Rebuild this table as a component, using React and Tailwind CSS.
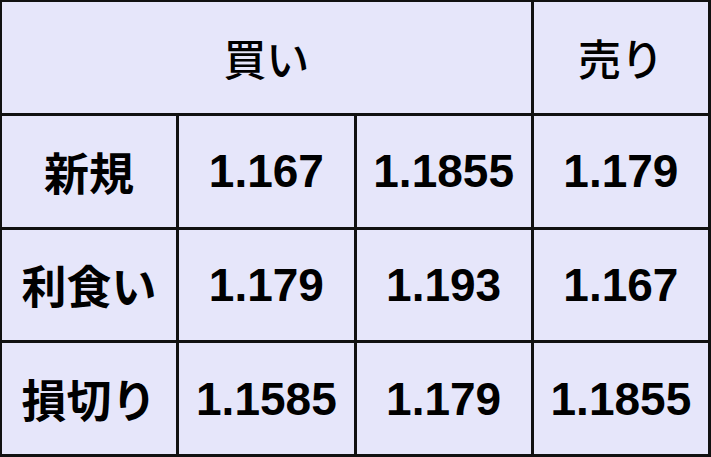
import React from "react";

const rows = [
  { label: "新規", values: ["1.167", "1.1855", "1.179"] },
  { label: "利食い", values: ["1.179", "1.193", "1.167"] },
  { label: "損切り", values: ["1.1585", "1.179", "1.1855"] },
];

const cell = "bg-[#e6e6fa] flex items-center justify-center leading-none";
const jp = "font-['Noto_Sans_CJK_JP','Noto_Sans',sans-serif]";
const num = "font-['Liberation_Sans',Arial,sans-serif]";

const App = () => {
  return (
    <div className="w-[711px] h-[457px] bg-[#111111] pt-[2px] pl-[2px] pr-[3px] pb-[3px] grid grid-cols-4 grid-rows-4 gap-[3px] text-black">
      {/* Header */}
      <div className={`${cell} ${jp} col-span-3 text-[43px] font-medium`}>買い</div>
      <div className={`${cell} ${jp} text-[43px] font-medium`}>売り</div>

      {/* Rows */}
      {rows.map((row) => (
        <React.Fragment key={row.label}>
          <div className={`${cell} ${jp} text-[45px] font-bold`}>{row.label}</div>
          {row.values.map((v, i) => (
            <div key={i} className={`${cell} ${num} text-[46px] font-bold`}>
              {v}
            </div>
          ))}
        </React.Fragment>
      ))}
    </div>
  );
};

export default App;
